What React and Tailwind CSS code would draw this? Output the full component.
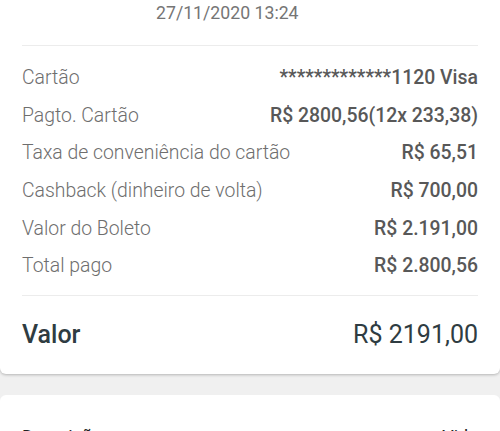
const rows = [
  { label: 'Cartão', value: '*************1120 Visa' },
  { label: 'Pagto. Cartão', value: 'R$ 2800,56(12x 233,38)' },
  { label: 'Taxa de conveniência do cartão', value: 'R$ 65,51' },
  { label: 'Cashback (dinheiro de volta)', value: 'R$ 700,00' },
  { label: 'Valor do Boleto', value: 'R$ 2.191,00' },
  { label: 'Total pago', value: 'R$ 2.800,56' },
];

export default function App() {
  return (
    <div className="w-[500px] h-[431px] overflow-hidden bg-[#f0f0f0] font-['Roboto',sans-serif]">
      <div className="bg-white rounded-b-[6px] shadow-[0_1px_3px_rgba(0,0,0,0.25)]">
        <div className="h-[45px] pl-[156px] pt-[1px] text-[17.7px] leading-[24px] text-[#757575]">
          27/11/2020 13:24
        </div>
        <div className="mx-[22px] border-t border-[#ececec]">
          <div className="pt-[13px] pb-[10px]">
            {rows.map((r) => (
              <div key={r.label} className="h-[37.6px] flex items-center justify-between text-[19.4px]">
                <span className="font-light text-[#6e6e6e]">{r.label}</span>
                <span className="font-medium text-[#585858]">{r.value}</span>
              </div>
            ))}
          </div>
          <div className="border-t border-[#ececec] h-[79px] flex items-center justify-between text-[25px] text-[#2f3c42]">
            <span className="font-medium">Valor</span>
            <span>R$ 2191,00</span>
          </div>
        </div>
      </div>
      <div className="mt-[21px] bg-white rounded-t-[6px] h-[60px] px-[22px] pt-[28px] flex justify-between text-[18px] text-[#222]">
        <span>Descrição</span>
        <span>Vida</span>
      </div>
    </div>
  );
}
